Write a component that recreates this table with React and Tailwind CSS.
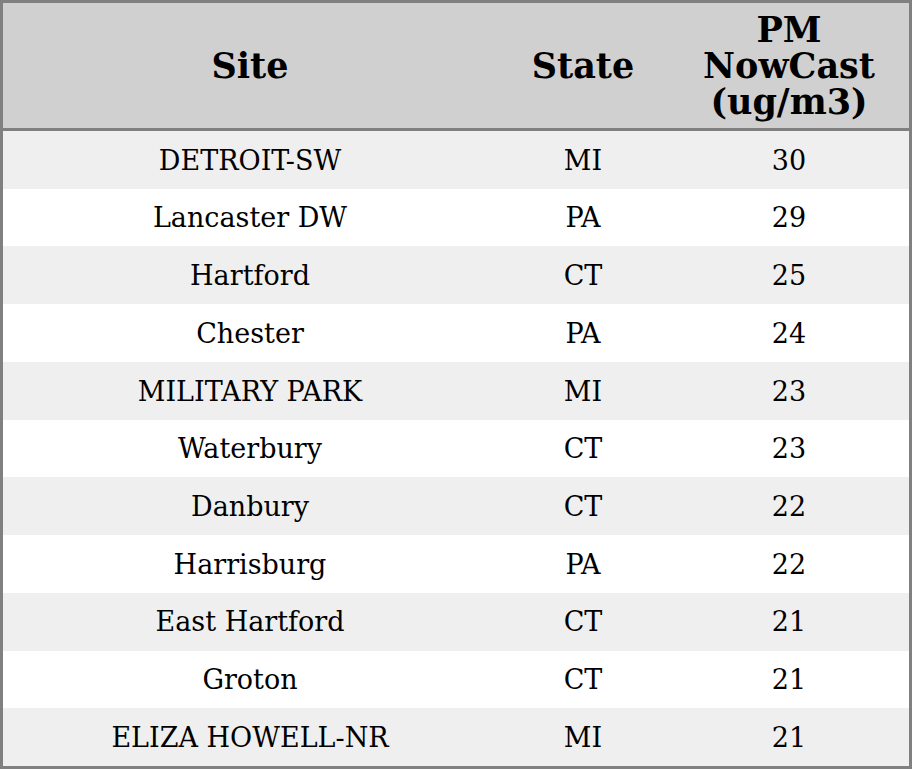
import React from 'react';

const rows = [
  ['DETROIT-SW', 'MI', '30'],
  ['Lancaster DW', 'PA', '29'],
  ['Hartford', 'CT', '25'],
  ['Chester', 'PA', '24'],
  ['MILITARY PARK', 'MI', '23'],
  ['Waterbury', 'CT', '23'],
  ['Danbury', 'CT', '22'],
  ['Harrisburg', 'PA', '22'],
  ['East Hartford', 'CT', '21'],
  ['Groton', 'CT', '21'],
  ['ELIZA HOWELL-NR', 'MI', '21'],
];

export default function App() {
  return (
    <div className="w-[912px] h-[769px] bg-white font-['DejaVu_Serif',serif] text-black">
      <div className="border-[3px] border-[#808080] h-full flex flex-col">
        {/* Header */}
        <div className="flex h-[128px] shrink-0 bg-[#d0d0d0] border-b-[3px] border-[#808080] font-bold text-[35px] leading-[36px] text-center">
          <div className="w-[494px] flex items-center justify-center">Site</div>
          <div className="w-[172px] flex items-center justify-center">State</div>
          <div className="flex-1 flex flex-col items-center justify-center">
            <div className="h-[36px]">PM</div>
            <div className="h-[36px]">NowCast</div>
            <div className="h-[36px]">(ug/m3)</div>
          </div>
        </div>

        {/* Rows */}
        {rows.map((r, i) => (
          <div
            key={i}
            className={`flex flex-1 items-center pt-[2px] text-[27px] text-center ${i % 2 === 0 ? 'bg-[#efefef]' : 'bg-white'}`}
          >
            <div className="w-[494px]">{r[0]}</div>
            <div className="w-[172px]">{r[1]}</div>
            <div className="flex-1">{r[2]}</div>
          </div>
        ))}
      </div>
    </div>
  );
}
